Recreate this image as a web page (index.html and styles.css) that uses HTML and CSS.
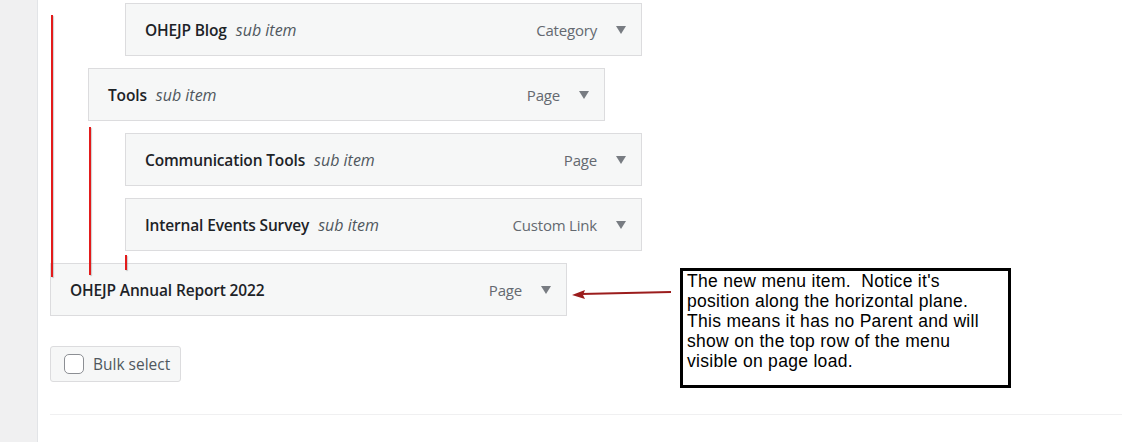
FILE: index.html
```html
<!DOCTYPE html>
<html>
<head>
<meta charset="utf-8">
<link rel="stylesheet" href="styles.css">
</head>
<body>
<div class="page">
  <aside class="sidebar"></aside>
  <main class="main">
    <ul class="menu">
      <li class="item depth-2"><span class="title">OHEJP Blog</span><span class="sub">sub item</span><span class="type">Category</span><span class="caret"></span></li>
      <li class="item depth-1"><span class="title">Tools</span><span class="sub">sub item</span><span class="type">Page</span><span class="caret"></span></li>
      <li class="item depth-2"><span class="title">Communication Tools</span><span class="sub">sub item</span><span class="type">Page</span><span class="caret"></span></li>
      <li class="item depth-2"><span class="title">Internal Events Survey</span><span class="sub">sub item</span><span class="type">Custom Link</span><span class="caret"></span></li>
      <li class="item depth-0"><span class="title">OHEJP Annual Report 2022</span><span class="type">Page</span><span class="caret"></span></li>
    </ul>
    <div class="bulk">
      <button class="bulk-btn"><span class="check"></span>Bulk select</button>
    </div>
    <hr class="divider">
  </main>
</div>
<span class="redline l1"></span>
<span class="redline l2"></span>
<span class="redline l3"></span>
<svg class="arrow" width="110" height="20" viewBox="0 0 110 20">
  <line x1="12" y1="10" x2="102" y2="8" stroke="#9b1c1c" stroke-width="2"/>
  <polygon points="3,11 16,6 14,11 16,15" fill="#9b1c1c"/>
</svg>
<div class="callout">The new menu item.&nbsp; Notice it's<br>position along the horizontal plane.<br>This means it has no Parent and will<br>show on the top row of the menu<br>visible on page load.</div>
</body>
</html>
```
FILE: styles.css
```css
html, body {
  margin: 0;
  padding: 0;
  background: #fff;
}
.page {
  display: flex;
  width: 1122px;
  height: 442px;
  overflow: hidden;
  font-family: "Open Sans", "Noto Sans", sans-serif;
}
.sidebar {
  width: 37px;
  flex: none;
  background: #f0f0f1;
  border-right: 1px solid #e2e4e7;
}
.main {
  flex: 1;
  padding-left: 12px;
}
.menu {
  list-style: none;
  margin: 0;
  padding: 3px 0 0 0;
  display: flex;
  flex-direction: column;
  gap: 12px;
}
.item {
  box-sizing: border-box;
  width: 517px;
  height: 53px;
  border: 1px solid #dcdcde;
  background: #f6f7f7;
  display: flex;
  align-items: center;
  padding: 0 15px 0 19px;
  font-size: 15px;
}
.depth-1 { margin-left: 38px; }
.depth-2 { margin-left: 75px; }
.title {
  font-size: 15.5px;
  font-weight: 600;
  color: #1d2327;
  letter-spacing: -0.15px;
}
.sub {
  font-size: 16px;
  font-style: italic;
  color: #50575e;
  margin-left: 9px;
}
.type {
  margin-left: auto;
  color: #646970;
  letter-spacing: -0.2px;
}
.caret {
  width: 0;
  height: 0;
  border-left: 5px solid transparent;
  border-right: 5px solid transparent;
  border-top: 8px solid #787c82;
  margin-left: 19px;
}
.bulk {
  padding-top: 30px;
}
.bulk-btn {
  box-sizing: border-box;
  height: 36px;
  width: 131px;
  display: flex;
  align-items: center;
  gap: 9px;
  padding: 0 0 0 13px;
  border: 1px solid #dcdcde;
  border-radius: 3px;
  background: #f6f7f7;
  color: #50575e;
  font-family: "Open Sans", "Noto Sans", sans-serif;
  font-size: 15.5px;
}
.check {
  box-sizing: border-box;
  width: 20px;
  height: 20px;
  border: 1px solid #8c8f94;
  border-radius: 5px;
  background: #fff;
}
.divider {
  margin: 32px 0 0 0;
  border: 0;
  border-top: 1px solid #f0f0f1;
}
.redline {
  position: absolute;
  width: 2px;
  background: #e31b1b;
  box-shadow: 1px 1px 1px rgba(120,120,120,0.35);
}
.l1 { left: 51px; top: 15px; height: 262px; }
.l2 { left: 89px; top: 127px; height: 148px; }
.l3 { left: 125px; top: 255px; height: 15px; }
.arrow {
  position: absolute;
  left: 569px;
  top: 284px;
}
.callout {
  position: absolute;
  left: 680px;
  top: 268px;
  box-sizing: border-box;
  width: 331px;
  height: 120px;
  border: 3px solid #000;
  padding: 0 4px 0 4px;
  background: #fff;
  font-family: "Liberation Sans", Arial, sans-serif;
  font-size: 17.5px;
  line-height: 20px;
  letter-spacing: 0.3px;
  color: #000;
  white-space: nowrap;
}
```
